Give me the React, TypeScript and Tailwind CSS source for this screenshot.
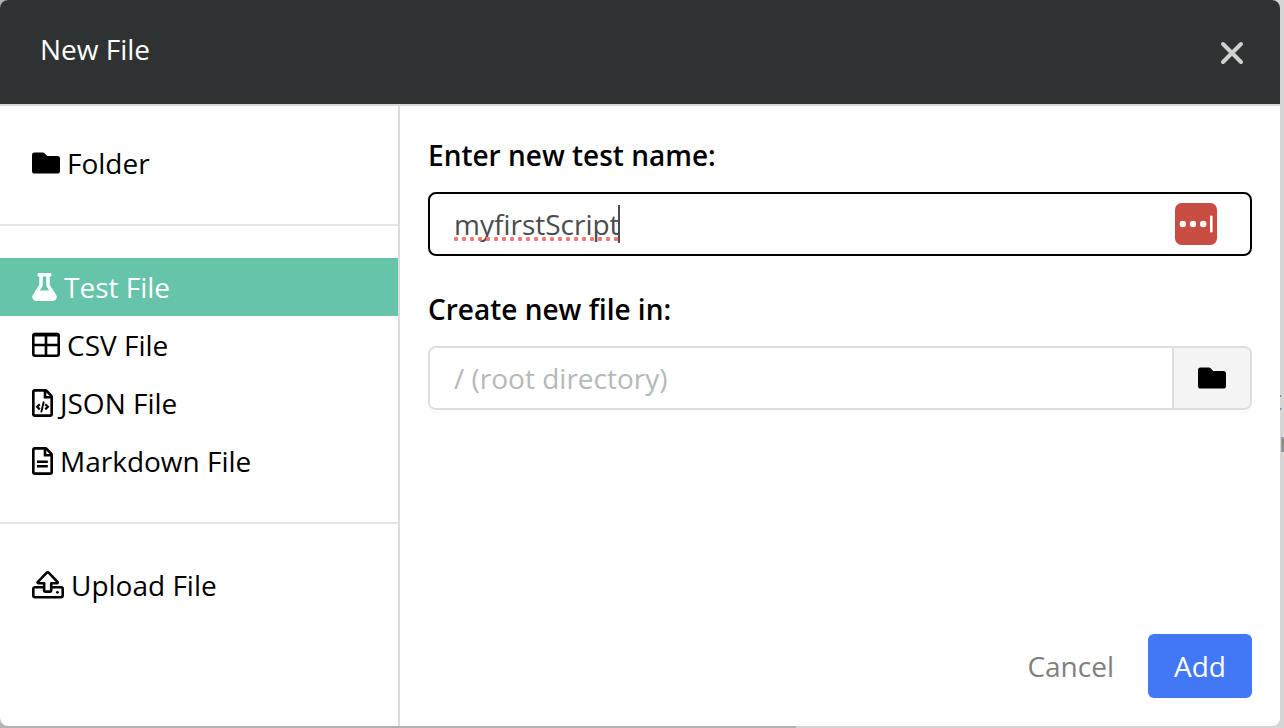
import React, { useState } from "react";

type IconProps = { className?: string };

function FolderIcon({ className = "" }: IconProps) {
  return (
    <svg viewBox="0 0 28 22" className={`h-[22px] w-7 shrink-0 ${className}`} fill="currentColor" aria-hidden="true">
      <path d="M2.6 0.5h8.2c.7 0 1.3.3 1.8.8l2.6 2.6h10.2A2.6 2.6 0 0 1 28 6.5v12.4a2.6 2.6 0 0 1-2.6 2.6H2.6A2.6 2.6 0 0 1 0 18.900V3.100A2.6 2.6 0 0 1 2.6.5z" />
    </svg>
  );
}

function FlaskIcon() {
  return (
    <svg viewBox="0 0 448 512" className="h-7 w-[25px] shrink-0" fill="currentColor" aria-hidden="true">
      <path d="M437.200 403.500 320 215V64h8c13.300 0 24-10.700 24-24V24c0-13.300-10.700-24-24-24H120c-13.300 0-24 10.700-24 24v16c0 13.300 10.700 24 24 24h8v151L10.800 403.500C-18.500 450.600 15.300 512 70.900 512h306.200c55.700 0 89.400-61.500 60.100-108.500zM137.900 320l48.200-77.600c3.700-5.200 5.800-11.600 5.800-18.400V64h64v160c0 6.900 2.200 13.200 5.800 18.400l48.200 77.600h-172z" />
    </svg>
  );
}

function TableIcon() {
  return (
    <svg viewBox="0 0 28 26" className="h-[26px] w-7 shrink-0" fill="none" stroke="currentColor" aria-hidden="true">
      <rect x="1.3" y="2" width="25.400" height="21.700" rx="1.700" strokeWidth="2.600" />
      <path d="M1.500 2.700h25" strokeWidth="3.600" />
      <path d="M1.500 13h25M14 3v20.500" strokeWidth="2.600" />
    </svg>
  );
}

function JsonIcon() {
  return (
    <svg viewBox="0 0 21 28" className="h-7 w-[21px] shrink-0" fill="none" stroke="currentColor" aria-hidden="true">
      <path d="M3 1.300h10.200c.5 0 .9.200 1.200.5l4.800 4.800c.3.300.5.700.5 1.200V25c0 .9-.7 1.700-1.700 1.700H3c-1 0-1.700-.8-1.700-1.700V3c0-1 .7-1.700 1.700-1.700z" strokeWidth="2.700" />
      <path d="M13 1.500v6.700h6.700" strokeWidth="2.600" />
      <path d="m7.800 15.200-2.700 2.600 2.700 2.600M13.200 15.200l2.700 2.600-2.700 2.600" strokeWidth="2.200" />
      <path d="M11.600 13.200 9.400 22.600" strokeWidth="1.900" strokeLinecap="round" />
    </svg>
  );
}

function DocumentIcon() {
  return (
    <svg viewBox="0 0 21 28" className="h-7 w-[21px] shrink-0" fill="none" stroke="currentColor" aria-hidden="true">
      <path d="M3 1.300h10.200c.5 0 .9.200 1.200.5l4.800 4.800c.3.300.5.700.5 1.200V25c0 .9-.7 1.700-1.700 1.700H3c-1 0-1.700-.8-1.700-1.700V3c0-1 .7-1.700 1.700-1.700z" strokeWidth="2.700" />
      <path d="M13 1.500v6.700h6.700" strokeWidth="2.600" />
      <path d="M5 14.700h10.800M5 19.200h10.800" strokeWidth="2.500" />
    </svg>
  );
}

function UploadIcon() {
  return (
    <svg viewBox="0 0 32 28" className="h-7 w-8 shrink-0" fill="none" stroke="currentColor" strokeLinejoin="round" aria-hidden="true">
      <path d="M12.200 12.200H6.500c-.8 0-1.100-.8-.6-1.300l8.900-9.200c.6-.6 1.200-.6 1.800 0l8.900 9.200c.5.500.2 1.300-.6 1.300h-5.700v7.400c0 .6-.5 1-1 1h-5.100c-.5 0-1-.4-1-1z" strokeWidth="2.600" />
      <path d="M12 16.200H3c-1 0-1.700.7-1.700 1.700v6.600c0 1 .7 1.700 1.700 1.700h26c1 0 1.700-.7 1.700-1.700v-6.600c0-1-.7-1.700-1.700-1.700h-9.600" strokeWidth="2.600" />
      <circle cx="25.400" cy="21.300" r="1.400" fill="currentColor" stroke="none" />
    </svg>
  );
}

function PasswordManagerIcon() {
  return (
    <svg viewBox="0 0 42 42" className="size-[42px]" aria-hidden="true">
      <rect width="42" height="42" rx="6.500" fill="#c74d42" />
      <g fill="#fff">
        <circle cx="7.800" cy="21" r="3.200" />
        <circle cx="18" cy="21" r="3.200" />
        <circle cx="28.200" cy="21" r="3.200" />
        <rect x="35" y="12.500" width="2.600" height="17" rx="1" />
      </g>
    </svg>
  );
}

type Item = { label: string; icon: React.ReactNode };

const groups: Item[][] = [
  [{ label: "Folder", icon: <FolderIcon /> }],
  [
    { label: "Test File", icon: <FlaskIcon /> },
    { label: "CSV File", icon: <TableIcon /> },
    { label: "JSON File", icon: <JsonIcon /> },
    { label: "Markdown File", icon: <DocumentIcon /> },
  ],
  [{ label: "Upload File", icon: <UploadIcon /> }],
];

export default function App() {
  const [selected, setSelected] = useState("Test File");
  const [name, setName] = useState("myfirstScript");

  return (
    <div className="relative flex min-h-screen overflow-hidden bg-[linear-gradient(to_right,#b3b3b3_62%,#d6d6d6_62%)] pr-1 pb-0.5 font-['Open_Sans','Noto_Sans',sans-serif] text-[28px] leading-[38px] text-black">
      <div className="pointer-events-none absolute top-[378px] right-0 w-3 leading-[42px] text-[#858585]" aria-hidden="true">
        <p>t</p>
        <p className="pl-[7px]">r</p>
      </div>

      <section role="dialog" aria-labelledby="title" className="relative flex min-w-0 flex-1 flex-col overflow-hidden rounded-lg bg-white">
        <header className="flex h-[106px] shrink-0 items-center justify-between border-b-2 border-[#d9d9d9] bg-[#2f3232] pt-0.5 pr-9 pl-10 text-white">
          <h1 id="title" className="pb-2">New File</h1>
          <button type="button" aria-label="Close" className="text-[#d0d0d0]">
            <svg viewBox="0 0 24 24" className="size-6" fill="none" stroke="currentColor" strokeWidth="4" strokeLinecap="round" aria-hidden="true">
              <path d="m3 3 18 18M21 3 3 21" />
            </svg>
          </button>
        </header>

        <div className="flex flex-1">
          <nav aria-label="File type" className="w-[400px] shrink-0 border-r-2 border-[#dcdcdc]">
            {groups.map((items, i) => (
              <ul key={i} className="border-b-2 border-[#e5e5e5] py-8 first:pt-7 last:border-b-0">
                {items.map((item) => (
                  <li key={item.label}>
                    <button
                      type="button"
                      aria-pressed={selected === item.label}
                      onClick={() => setSelected(item.label)}
                      className={`flex h-[58px] w-full items-center gap-[7px] px-8 text-left ${selected === item.label ? "bg-[#65c4a9] text-white" : ""}`}
                    >
                      {item.icon}
                      <span>{item.label}</span>
                    </button>
                  </li>
                ))}
              </ul>
            ))}
          </nav>

          <form className="flex min-w-0 flex-1 flex-col px-7 pt-[30px] pb-7" onSubmit={(e) => e.preventDefault()}>
            <label htmlFor="name" className="font-semibold">Enter new test name:</label>
            <div className="relative mt-[18px]">
              <input
                id="name"
                type="text"
                value={name}
                spellCheck={false}
                onChange={(e) => setName(e.target.value)}
                className="block h-16 w-full rounded-lg border-2 border-black bg-white pr-24 pl-6 text-[#4a4d50] outline-none"
              />
              <div className="pointer-events-none absolute inset-y-0 left-[26px] flex items-center" aria-hidden="true">
                <div className="relative h-[38px]">
                  <span className="invisible">{name}</span>
                  <span className="absolute inset-x-0 bottom-0.5 h-1 bg-[radial-gradient(circle,#f27c74_2px,transparent_2.5px)] bg-[length:8px_4px] bg-[position:-2px_0]" />
                  <span className="absolute inset-y-0 right-0 w-0.5 bg-[#4a4d50]" />
                </div>
              </div>
              <button type="button" aria-label="Password manager" className="absolute top-[11px] right-[35px]">
                <PasswordManagerIcon />
              </button>
            </div>

            <label htmlFor="directory" className="mt-[34px] font-semibold">Create new file in:</label>
            <div className="mt-[18px] flex h-16 overflow-hidden rounded-lg border-2 border-[#dedede]">
              <input
                id="directory"
                type="text"
                placeholder="/ (root directory)"
                className="min-w-0 flex-1 bg-white px-6 outline-none placeholder:text-[#b5b9b8]"
              />
              <button type="button" aria-label="Choose folder" className="flex w-[78px] items-center justify-center border-l-2 border-[#dedede] bg-[#f4f4f4]">
                <FolderIcon />
              </button>
            </div>

            <div className="mt-auto flex items-center justify-end gap-[34px]">
              <button type="button" className="text-[#808080]">Cancel</button>
              <button type="submit" className="h-16 w-[104px] rounded-md bg-[#4277f6] text-white">Add</button>
            </div>
          </form>
        </div>
      </section>
    </div>
  );
}
